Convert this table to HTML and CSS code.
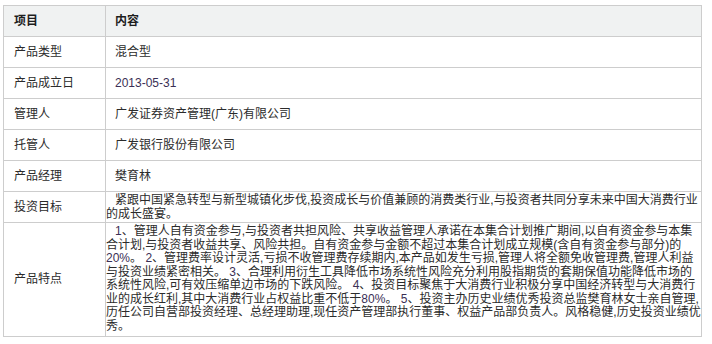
FILE: index.html
```html
<!DOCTYPE html>
<html lang="zh-CN">
<head>
<meta charset="utf-8">
<title>产品信息</title>
<link rel="stylesheet" href="styles.css">
</head>
<body>
<table class="info">
  <colgroup><col class="c-key"><col class="c-val"></colgroup>
  <thead>
    <tr><th class="key">项目</th><th class="val">内容</th></tr>
  </thead>
  <tbody>
    <tr><td class="key">产品类型</td><td class="val">混合型</td></tr>
    <tr><td class="key">产品成立日</td><td class="val num">2013-05-31</td></tr>
    <tr><td class="key">管理人</td><td class="val">广发证券资产管理(广东)有限公司</td></tr>
    <tr><td class="key">托管人</td><td class="val">广发银行股份有限公司</td></tr>
    <tr><td class="key">产品经理</td><td class="val">樊育林</td></tr>
    <tr><td class="key">投资目标</td><td class="val long">紧跟中国紧急转型与新型城镇化步伐,投资成长与价值兼顾的消费类行业,与投资者共同分享未来中国大消费行业<br>的成长盛宴。</td></tr>
    <tr><td class="key">产品特点</td><td class="val long last"><span class="num">1</span>、管理人自有资金参与,与投资者共担风险、共享收益管理人承诺在本集合计划推广期间,以自有资金参与本集<br>合计划,与投资者收益共享、风险共担。自有资金参与金额不超过本集合计划成立规模(含自有资金参与部分)的<br><span class="num">20%</span>。 <span class="num">2</span>、管理费率设计灵活,亏损不收管理费存续期内,本产品如发生亏损,管理人将全额免收管理费,管理人利益<br>与投资业绩紧密相关。 <span class="num">3</span>、合理利用衍生工具降低市场系统性风险充分利用股指期货的套期保值功能降低市场的<br>系统性风险,可有效压缩单边市场的下跌风险。 <span class="num">4</span>、投资目标聚焦于大消费行业积极分享中国经济转型与大消费行<br>业的成长红利,其中大消费行业占权益比重不低于<span class="num">80%</span>。 <span class="num">5</span>、投资主办历史业绩优秀投资总监樊育林女士亲自管理,<br>历任公司自营部投资经理、总经理助理,现任资产管理部执行董事、权益产品部负责人。风格稳健,历史投资业绩优<br>秀。</td></tr>
  </tbody>
</table>
</body>
</html>
```

FILE: styles.css
```css
html, body {
  margin: 0;
  padding: 0;
  background: #ffffff;
}

body {
  font-family: "Liberation Sans", "Noto Sans CJK SC", sans-serif;
  font-size: 12px;
  color: #2b2b2b;
}

.info {
  margin: 5px 0 0 3px;
  width: 699px;
  border-collapse: collapse;
  table-layout: fixed;
}

.c-key {
  width: 102px;
}

.info th,
.info td {
  border: 1px solid #cdcdcd;
  height: 27px;
  padding: 2px 0 1px 0;
  line-height: 13.5px;
  text-align: left;
  vertical-align: middle;
  font-weight: normal;
}

.info th {
  background: #f0f2f2;
  font-weight: bold;
  color: #1e1e1e;
}

.info .key {
  padding-left: 10px;
}

.info .val {
  padding-left: 9px;
}

.info .val.long {
  padding-left: 0;
  text-indent: 9px;
  white-space: nowrap;
}

.info .val.last {
  padding-bottom: 3px;
}

.num {
  color: #3b2f55;
}
```
